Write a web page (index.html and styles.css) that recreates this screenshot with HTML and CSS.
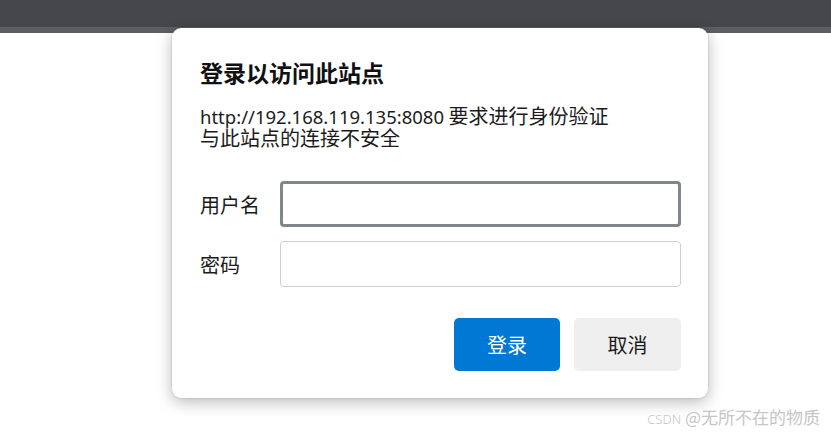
FILE: index.html
```html
<!DOCTYPE html>
<html lang="zh">
<head>
<meta charset="utf-8">
<link rel="stylesheet" href="styles.css">
</head>
<body>
<div class="topbar"></div>
<div class="topbar-edge"></div>
<div class="dialog">
  <h1 class="title">登录以访问此站点</h1>
  <p class="desc"><span class="line"><span class="latin">http://192.168.119.135:8080</span> 要求进行身份验证</span><span class="line">与此站点的连接不安全</span></p>
  <div class="form">
    <label class="row"><span class="label">用户名</span><span class="input focused"></span></label>
    <label class="row"><span class="label">密码</span><span class="input"></span></label>
  </div>
  <div class="actions">
    <button class="btn primary">登录</button>
    <button class="btn secondary">取消</button>
  </div>
</div>
<div class="watermark"><span class="wm-latin">CSDN</span> @无所不在的物质</div>
</body>
</html>
```
FILE: styles.css
```css
html, body { margin: 0; padding: 0; }
body {
  width: 831px; height: 434px; overflow: hidden; background: #fff;
  font-family: "Noto Sans", "Noto Sans CJK SC", sans-serif; color: #1b1b1b;
  position: relative;
}
.topbar { height: 27px; background: #46474b; }
.topbar-edge { height: 6px; background: #5d5e62; }
.dialog {
  position: absolute; left: 172px; top: 28px; width: 536px; height: 370px;
  box-sizing: border-box; background: #fff; border-radius: 9px;
  box-shadow: 0 4px 16px rgba(0,0,0,0.28), 0 0 2px rgba(0,0,0,0.2);
  padding: 29px 27px 0 28px;
}
.title { margin: 0; font-size: 23px; font-weight: 700; line-height: 30px; color: #111; font-family: "Noto Sans CJK SC", sans-serif; }
.desc { margin: 18px 0 0; font-size: 20px; color: #1b1b1b; font-family: "Noto Sans CJK SC", sans-serif; display: flex; flex-direction: column; }
.desc .line { display: block; height: 22px; line-height: 22px; white-space: nowrap; }
.desc .latin { font-family: "Noto Sans", sans-serif; font-size: 18.5px; }
.form { margin-top: 32px; display: flex; flex-direction: column; gap: 14px; }
.row { display: flex; align-items: center; }
.label { width: 80px; font-size: 20px; color: #1b1b1b; font-family: "Noto Sans CJK SC", sans-serif; }
.input { width: 401px; height: 46px; box-sizing: border-box; border: 1px solid #cfcfcf; border-radius: 4px; background: #fff; }
.input.focused { border: 3px solid #80868b; }
.actions { display: flex; justify-content: flex-end; gap: 14px; margin-top: 31px; }
.btn { width: 106px; height: 53px; border: none; border-radius: 5px; font-size: 20px; font-family: "Noto Sans CJK SC", sans-serif; padding: 0; }
.btn.primary { background: #0078d4; color: #fff; }
.btn.secondary { background: #efefef; color: #1b1b1b; width: 107px; }
.watermark { position: absolute; right: 11px; top: 405px; font-size: 17px; line-height: 24px; color: #c6c6c6; font-family: "Noto Sans CJK SC", sans-serif; }
.wm-latin { font-family: "Noto Sans", sans-serif; font-size: 13px; font-weight: 300; }
```
